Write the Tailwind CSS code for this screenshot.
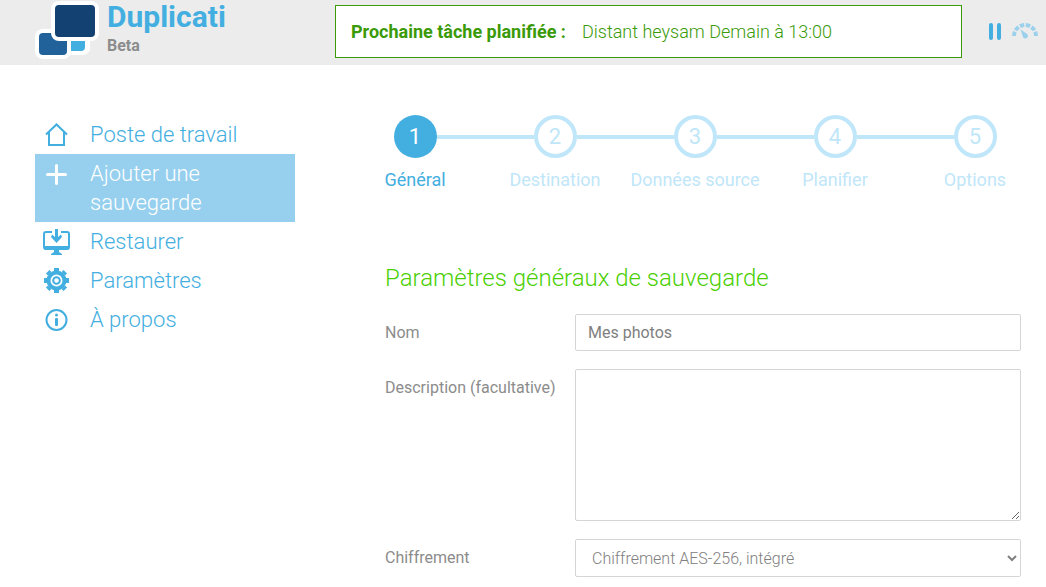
<!DOCTYPE html>
<html lang="fr">
<head>
  <meta charset="UTF-8" />
  <meta name="viewport" content="width=device-width, initial-scale=1.0"/>
  <title>Duplicati</title>
  <script src="https://cdn.jsdelivr.net/npm/@tailwindcss/browser@4"></script>
</head>
<body class="bg-white font-['Roboto','Noto_Sans',sans-serif] text-base font-light text-[#808080]">

  <!-- Header -->
  <header class="flex h-[65px] items-start bg-[#ececec] pl-[35px] pr-2">
    <a href="#" class="flex w-[300px] shrink-0 gap-2">
      <svg class="h-[60px] w-16" viewBox="0 0 64 60">
        <rect x="30" y="27" width="25" height="28" rx="7" fill="#fff"/>
        <path d="M34 30h16v17a4 4 0 0 1-4 4H34z" fill="#43aee0"/>
        <rect x="0" y="29" width="36" height="30" rx="8" fill="#fff"/>
        <rect x="4" y="33" width="28" height="22" rx="4" fill="#22629a"/>
        <rect x="16" y="1" width="48" height="40" rx="8" fill="#fff"/>
        <rect x="20" y="5" width="40" height="32" rx="4" fill="#124172"/>
      </svg>
      <span class="flex flex-col">
        <span class="text-[30px] leading-[34px] font-bold text-[#43aee0]">Duplicati</span>
        <span class="text-base leading-6 font-bold text-[#8c8c8c]">Beta</span>
      </span>
    </a>
    <div class="mt-[5px] flex h-[53px] flex-1 items-center gap-4 border border-[#3a9a08] bg-white px-[15px] text-[18px] text-[#3a9a08]">
      <strong class="font-bold">Prochaine tâche planifiée :</strong>
      <span>Distant heysam Demain à 13:00</span>
    </div>
    <div class="ml-[26px] mt-[22px] flex items-center gap-2">
      <button type="button" aria-label="Pause" class="h-[18px] w-[14px]">
        <svg class="h-[18px] w-[14px]" viewBox="0 0 14 18" fill="#43aee0">
          <rect x="1" y="1" width="4" height="17" rx="2"/>
          <rect x="9" y="1" width="4" height="17" rx="2"/>
        </svg>
      </button>
      <button type="button" aria-label="Vitesse" class="h-[18px] w-7">
        <svg class="h-[18px] w-7" viewBox="0 0 28 18">
          <path d="M4 14A11 11 0 0 1 26 14" fill="none" stroke="#9bd1ec" stroke-width="4" stroke-dasharray="4.4 1.6"/>
          <path d="M10.500 7.500l6.300 4.300a2.600 2.600 0 1 1-4 2.700z" fill="#9bd1ec"/>
        </svg>
      </button>
    </div>
  </header>

  <div class="flex pt-[50px]">

    <!-- Menu -->
    <nav class="ml-[35px] w-[260px] shrink-0 text-[22px] leading-[29px] text-[#43aee0]">
      <a href="#" class="flex gap-5 py-[5px] pl-2">
        <svg class="h-[29px] w-[27px] shrink-0" viewBox="0 0 27 29" fill="none" stroke="#43aee0" stroke-width="2">
          <path d="M3 14.5L13.500 4.500L24 14.500M6 12v13h15V12"/>
        </svg>
        <span>Poste de travail</span>
      </a>
      <a href="#" class="flex gap-5 bg-[#96d0ee] py-[5px] pl-2 text-white">
        <svg class="h-[29px] w-[27px] shrink-0" viewBox="0 0 27 29" fill="none" stroke="#fff" stroke-width="3" stroke-linecap="round">
          <path d="M13.500 6.500v18M4.500 15.500h18"/>
        </svg>
        <span>Ajouter une sauvegarde</span>
      </a>
      <a href="#" class="flex gap-5 py-[5px] pl-2">
        <svg class="h-[29px] w-[27px] shrink-0" viewBox="0 0 27 29">
          <path d="M9 5H3a2 2 0 0 0-2 2v13a2 2 0 0 0 2 2h21a2 2 0 0 0 2-2V7a2 2 0 0 0-2-2h-6" fill="none" stroke="#43aee0" stroke-width="2"/>
          <path d="M1 19h25v2a2 2 0 0 1-2 2H3a2 2 0 0 1-2-2zM11 23h5v2l3 2v1H8v-1l3-2zM12 2h3v8l3-2.500 1 2.500-5.500 6L8 10l1-2.500 3 2.500z" fill="#43aee0"/>
        </svg>
        <span>Restaurer</span>
      </a>
      <a href="#" class="flex gap-5 py-[5px] pl-2">
        <svg class="h-[29px] w-[27px] shrink-0" viewBox="0 0 27 29" fill="none" stroke="#43aee0">
          <circle cx="13.500" cy="14.500" r="8" stroke-width="4"/>
          <path d="M13.500 2v4M13.500 23v4M1 14.500h4M22 14.500h4M4.700 5.700l2 2M20.300 21.300l2 2M4.700 23.300l2-2M20.300 7.700l2-2" stroke-width="5"/>
          <circle cx="13.500" cy="14.500" r="3.300" stroke-width="2"/>
        </svg>
        <span>Paramètres</span>
      </a>
      <a href="#" class="flex gap-5 py-[5px] pl-2">
        <svg class="h-[29px] w-[27px] shrink-0" viewBox="0 0 27 29">
          <circle cx="13.500" cy="15" r="10" fill="none" stroke="#43aee0" stroke-width="2"/>
          <circle cx="13.500" cy="10" r="1.500" fill="#43aee0"/>
          <rect x="12" y="13" width="3" height="8" rx="1" fill="#43aee0"/>
        </svg>
        <span>À propos</span>
      </a>
    </nav>

    <main class="ml-[50px] flex-1">

      <!-- Steps -->
      <ol class="mr-px grid grid-cols-5 text-center text-[18px] leading-6 font-normal text-[#bfe6f9]">
        <li class="flex flex-col gap-[10px]">
          <div class="flex items-center">
            <span class="h-1 flex-1"></span>
            <span class="flex size-[43px] items-center justify-center rounded-full bg-[#43aee0] text-[22px] text-white">1</span>
            <span class="h-1 flex-1 bg-[#bfe6f9]"></span>
          </div>
          <span class="text-[#43aee0]">Général</span>
        </li>
        <li class="flex flex-col gap-[10px]">
          <div class="flex items-center">
            <span class="h-1 flex-1 bg-[#bfe6f9]"></span>
            <span class="flex size-[43px] items-center justify-center rounded-full border-4 border-[#bfe6f9] text-[22px]">2</span>
            <span class="h-1 flex-1 bg-[#bfe6f9]"></span>
          </div>
          <span>Destination</span>
        </li>
        <li class="flex flex-col gap-[10px]">
          <div class="flex items-center">
            <span class="h-1 flex-1 bg-[#bfe6f9]"></span>
            <span class="flex size-[43px] items-center justify-center rounded-full border-4 border-[#bfe6f9] text-[22px]">3</span>
            <span class="h-1 flex-1 bg-[#bfe6f9]"></span>
          </div>
          <span class="whitespace-nowrap">Données source</span>
        </li>
        <li class="flex flex-col gap-[10px]">
          <div class="flex items-center">
            <span class="h-1 flex-1 bg-[#bfe6f9]"></span>
            <span class="flex size-[43px] items-center justify-center rounded-full border-4 border-[#bfe6f9] text-[22px]">4</span>
            <span class="h-1 flex-1 bg-[#bfe6f9]"></span>
          </div>
          <span>Planifier</span>
        </li>
        <li class="flex flex-col gap-[10px]">
          <div class="flex items-center">
            <span class="h-1 flex-1 bg-[#bfe6f9]"></span>
            <span class="flex size-[43px] items-center justify-center rounded-full border-4 border-[#bfe6f9] text-[22px]">5</span>
            <span class="h-1 flex-1"></span>
          </div>
          <span>Options</span>
        </li>
      </ol>

      <!-- Form -->
      <form class="pt-[70px] pr-[25px] pl-10">
        <h2 class="mb-5 text-[24px] leading-8 text-[#4bcf04]">Paramètres généraux de sauvegarde</h2>
        <div class="flex flex-col gap-[18px]">
          <div class="flex">
            <label for="name" class="w-[190px] shrink-0 pt-[7px] font-normal text-[#8c8c8c]">Nom</label>
            <input id="name" type="text" value="Mes photos" class="h-[37px] min-w-0 flex-1 rounded-xs border border-[#d5d5d5] px-3 font-normal"/>
          </div>
          <div class="flex">
            <label for="description" class="w-[190px] shrink-0 pt-[7px] font-normal text-[#8c8c8c]">Description (facultative)</label>
            <textarea id="description" class="h-[152px] min-w-0 flex-1 rounded-xs border border-[#d5d5d5] px-3 py-2"></textarea>
          </div>
          <div class="flex">
            <label for="encryption" class="w-[190px] shrink-0 pt-[7px] font-normal text-[#8c8c8c]">Chiffrement</label>
            <select id="encryption" class="h-[38px] min-w-0 flex-1 rounded-xs border border-[#d5d5d5] bg-white pl-3">
              <option>Chiffrement AES-256, intégré</option>
            </select>
          </div>
        </div>
      </form>
    </main>
  </div>
</body>
</html>
